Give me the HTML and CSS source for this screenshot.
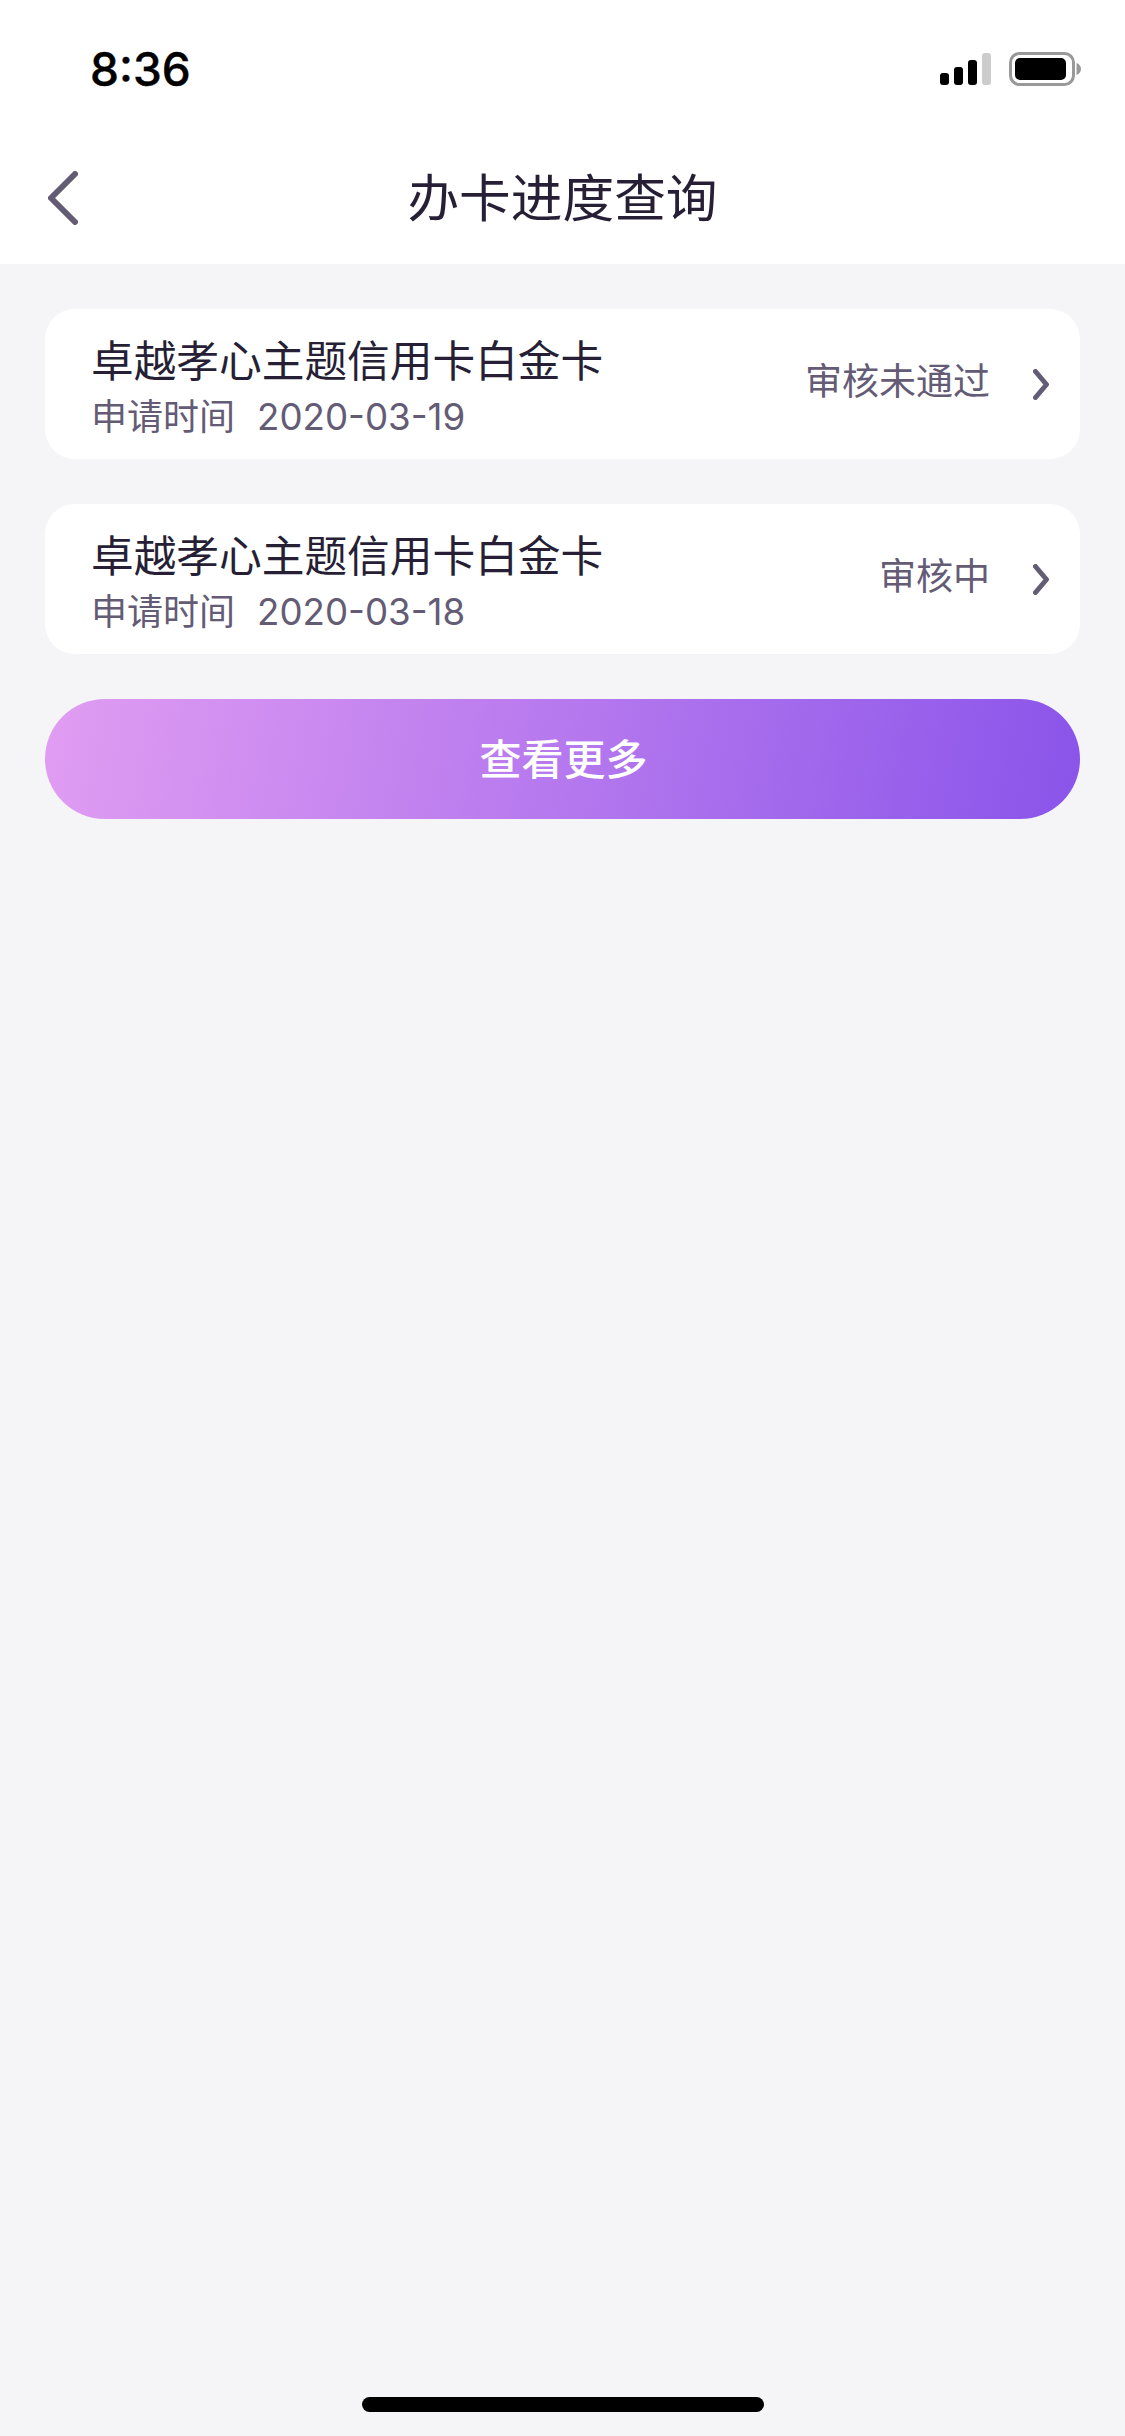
FILE: index.html
```html
<!DOCTYPE html>
<html lang="zh-CN">
<head>
<meta charset="utf-8">
<title>办卡进度查询</title>
<link rel="stylesheet" href="styles.css">
</head>
<body>
<div class="page">
  <header class="top">
    <div class="status">
      <span class="time">8:36</span>
      <div class="status-icons">
        <svg class="signal" width="51" height="32" viewBox="0 0 51 32"><rect x="0" y="20" width="9" height="12" rx="3" fill="#000"/><rect x="14" y="14" width="9" height="18" rx="3" fill="#000"/><rect x="28" y="7" width="9" height="25" rx="3" fill="#000"/><rect x="42" y="0" width="9" height="32" rx="3" fill="#ccc"/></svg>
        <svg class="battery" width="74" height="34" viewBox="0 0 74 34"><rect x="1.500" y="1.500" width="63" height="31" rx="9" fill="none" stroke="#999" stroke-width="3"/><rect x="6" y="6" width="51" height="22" rx="5" fill="#000"/><path d="M67.500 11c3 1 4.500 3.500 4.500 6s-1.500 5-4.500 6z" fill="#999"/></svg>
      </div>
    </div>
    <nav class="nav">
      <svg class="back" width="30" height="54" viewBox="0 0 30 54"><path d="M27 3 3 27l24 24" fill="none" stroke="#645b75" stroke-width="6" stroke-linecap="round" stroke-linejoin="round"/></svg>
      <h1 class="title">办卡进度查询</h1>
    </nav>
  </header>
  <main class="content">
    <section class="card">
      <div class="info">
        <div class="name">卓越孝心主题信用卡白金卡</div>
        <div class="date"><span>申请时间</span><span class="day">2020-03-19</span></div>
      </div>
      <span class="state">审核未通过</span>
      <svg class="chevron" width="16" height="31" viewBox="0 0 16 31"><path d="M2.500 2.500l11 13-11 13" fill="none" stroke="#645b75" stroke-width="5" stroke-linecap="round" stroke-linejoin="round"/></svg>
    </section>
    <section class="card">
      <div class="info">
        <div class="name">卓越孝心主题信用卡白金卡</div>
        <div class="date"><span>申请时间</span><span class="day">2020-03-18</span></div>
      </div>
      <span class="state">审核中</span>
      <svg class="chevron" width="16" height="31" viewBox="0 0 16 31"><path d="M2.500 2.500l11 13-11 13" fill="none" stroke="#645b75" stroke-width="5" stroke-linecap="round" stroke-linejoin="round"/></svg>
    </section>
    <button class="more">查看更多</button>
  </main>
  <div class="home-bar"></div>
</div>
</body>
</html>
```

FILE: styles.css
```css
* { box-sizing: border-box; margin: 0; padding: 0; }
html, body { width: 1125px; height: 2436px; }
body {
  background: #f5f5f7;
  font-family: Inter, "Noto Sans CJK SC", sans-serif;
  overflow: hidden;
}
.page { width: 1125px; height: 2436px; display: flex; flex-direction: column; }
.top { height: 264px; background: #fff; flex: none; }
.status {
  height: 132px;
  padding: 52px 42px 0 90px;
  display: flex;
  justify-content: space-between;
  align-items: flex-start;
}
.time { font-size: 46px; font-weight: 500; line-height: 36px; color: #000; margin-top: -1px; -webkit-text-stroke: 0.4px #000; }
.status-icons { display: flex; gap: 18px; align-items: flex-start; }
.signal { margin-top: 1px; }
.nav {
  height: 132px;
  display: flex;
  align-items: center;
  justify-content: center;
  position: relative;
  padding-bottom: 6px;
}
.back { position: absolute; left: 48px; top: 39px; }
.title {
  font-size: 51.700px;
  font-weight: 400;
  color: #261f35;
  line-height: 60px;
  font-family: "Noto Sans CJK SC", sans-serif;
}
.content { padding: 45px 45px 0; display: flex; flex-direction: column; gap: 45px; }
.card {
  height: 150px;
  background: #fff;
  border-radius: 30px;
  display: flex;
  align-items: center;
  padding: 0 31px 0 46px;
}
.info { flex: 1; display: flex; flex-direction: column; padding-top: 3px; }
.name { font-size: 42.700px; line-height: 50px; color: #261f35; font-family: "Noto Sans CJK SC", sans-serif; margin-bottom: 12px; }
.date { font-size: 36px; line-height: 44px; color: #645b75; display: flex; gap: 22px; }
.day { font-size: 36.700px; }
.state { font-size: 37px; line-height: 44px; color: #645b75; font-family: "Noto Sans CJK SC", sans-serif; margin: 0 43px 10px 0; }
.more {
  height: 120px;
  border: 0;
  border-radius: 60px;
  background: linear-gradient(100deg, #e19df2 0%, #8a54ea 100%);
  color: #fff;
  font-size: 42px;
  font-weight: 500;
  font-family: "Noto Sans CJK SC", sans-serif;
  padding: 0 0 5px 2px;
}
.home-bar {
  width: 402px;
  height: 15px;
  border-radius: 8px;
  background: #000;
  margin: auto auto 0;
  transform: translateY(-24px);
}
```
